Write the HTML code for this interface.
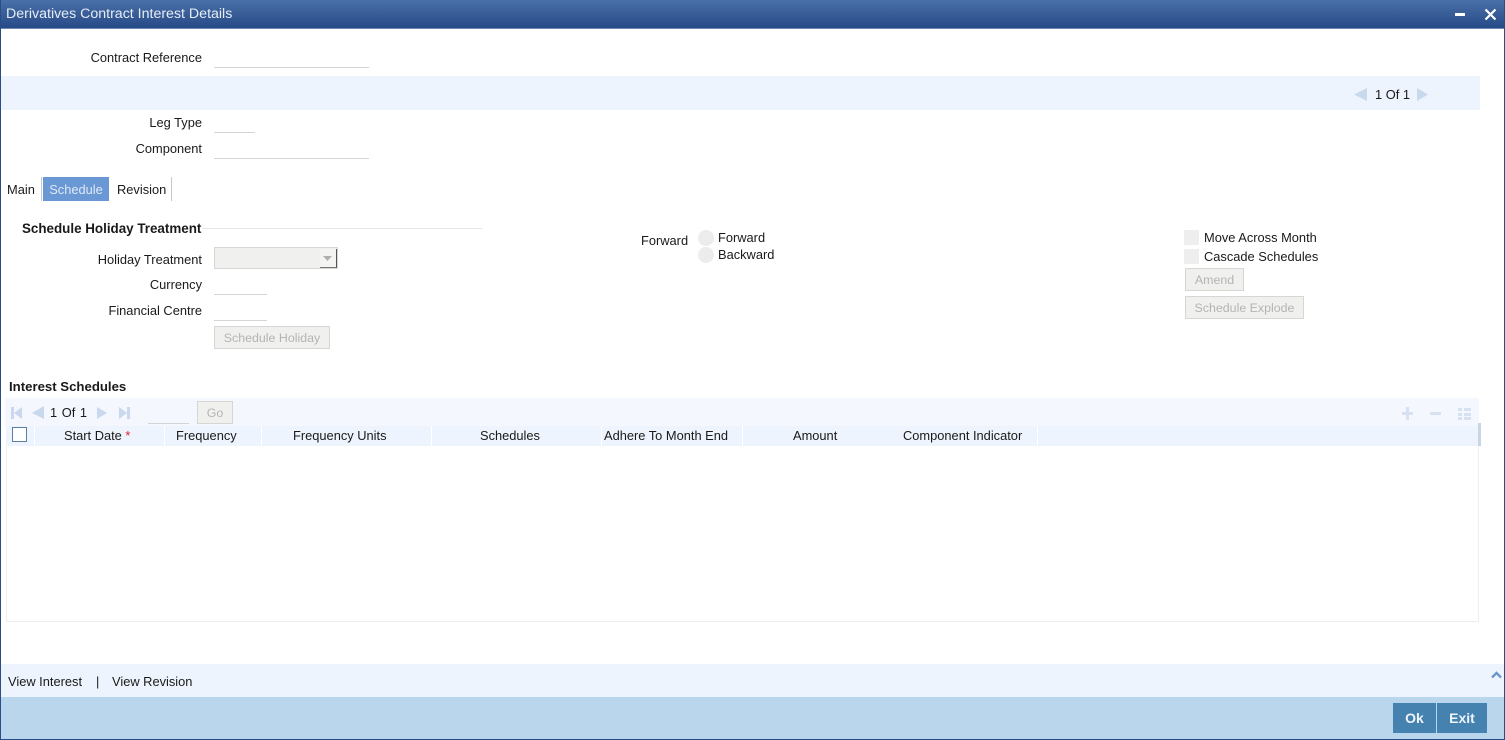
<!DOCTYPE html>
<html><head><meta charset="utf-8"><style>
html,body{margin:0;padding:0;background:#fff;width:1505px;height:740px;overflow:hidden}
body{position:relative;font-family:"Liberation Sans",Arial,sans-serif;font-size:12.85px;color:#1a1a1a}
.a{position:absolute}
.t{position:absolute;white-space:nowrap;line-height:16px;height:16px}
.r{position:absolute;white-space:nowrap;line-height:16px;height:16px;right:1303px;text-align:right}
.l{position:absolute;height:1px;background:#d4d4d4}
.b{position:absolute;box-sizing:border-box;background:#f0f0ee;border:1px solid #d6d6d2;color:#b4b4b4;text-align:center;font-size:12.4px;line-height:22px}
.h{position:absolute;top:426px;height:20px;line-height:20px;white-space:nowrap;text-align:center}
.s{position:absolute;top:426px;height:20px;width:1px;background:#fff}
</style></head><body>
<div class="a" style="left:0;top:0;width:1505px;height:29px;background:linear-gradient(#4a70a8,#264a86);border-bottom:1px solid #6f8cb0;box-sizing:border-box"></div>
<div class="t" style="left:6px;top:6px;color:#e6edf6;font-size:14.2px">Derivatives Contract Interest Details</div>
<div class="a" style="left:1455px;top:13px;width:10px;height:3px;background:#fff"></div>
<svg class="a" style="left:1484px;top:8px" width="13" height="13"><path d="M1.5 1.5L11.5 11.5M11.5 1.5L1.5 11.5" stroke="#fff" stroke-width="2.2"/></svg>
<div class="a" style="left:0;top:0;width:1px;height:740px;background:#2a4d88"></div>
<div class="a" style="left:1504px;top:0;width:1px;height:740px;background:#2a4d88"></div>
<div class="a" style="left:0;top:739px;width:1505px;height:1px;background:#2a4d88"></div>

<div class="r" style="top:50px">Contract Reference</div>
<div class="l" style="left:214px;top:67px;width:155px"></div>
<div class="a" style="left:1px;top:76px;width:1479px;height:34px;background:#eef4fd"></div>
<svg class="a" style="left:1354px;top:88px" width="13" height="13"><path d="M13 0V13L0 6.5Z" fill="#c9d8ec"/></svg>
<div class="t" style="left:1375px;top:87px">1 Of 1</div>
<svg class="a" style="left:1417px;top:88px" width="11" height="13"><path d="M0 0V13L11 6.5Z" fill="#c9d8ec"/></svg>

<div class="r" style="top:115px">Leg Type</div>
<div class="l" style="left:214px;top:132px;width:41px"></div>
<div class="r" style="top:141px">Component</div>
<div class="l" style="left:214px;top:158px;width:155px"></div>

<div class="t" style="left:7px;top:182px">Main</div>
<div class="a" style="left:41px;top:177px;width:1px;height:24px;background:#c8c8c8"></div>
<div class="a" style="left:43px;top:177px;width:66px;height:24px;background:#6a98d4;color:#dfe9f6;line-height:25px;text-align:center">Schedule</div>
<div class="t" style="left:117px;top:182px">Revision</div>
<div class="a" style="left:171px;top:177px;width:1px;height:24px;background:#c8c8c8"></div>

<div class="t" style="left:22px;top:221px;font-weight:bold;font-size:13.4px">Schedule Holiday Treatment</div>
<div class="l" style="left:202px;top:228px;width:280px;background:#e6e6e6"></div>

<div class="r" style="top:252px">Holiday Treatment</div>
<div class="a" style="left:214px;top:247px;width:124px;height:22px;box-sizing:border-box;background:#f0f0ee;border:1px solid #d6d6d2"></div>
<div class="a" style="left:320px;top:249px;width:17px;height:19px;box-sizing:border-box;background:#f4f4f2;border-right:1px solid #555;border-bottom:1px solid #777"></div>
<svg class="a" style="left:323px;top:256px" width="9" height="5"><path d="M0 0H9L4.5 5Z" fill="#b0b0b0"/></svg>
<div class="r" style="top:277px">Currency</div>
<div class="l" style="left:214px;top:294px;width:53px"></div>
<div class="r" style="top:303px">Financial Centre</div>
<div class="l" style="left:214px;top:320px;width:53px"></div>
<div class="b" style="left:214px;top:326px;width:116px;height:23px">Schedule Holiday</div>

<div class="t" style="left:641px;top:233px">Forward</div>
<div class="a" style="left:698px;top:230px;width:16px;height:16px;border-radius:50%;background:#ececec"></div>
<div class="t" style="left:718px;top:230px">Forward</div>
<div class="a" style="left:698px;top:247px;width:16px;height:16px;border-radius:50%;background:#ececec"></div>
<div class="t" style="left:718px;top:247px">Backward</div>

<div class="a" style="left:1184px;top:230px;width:15px;height:15px;background:#eeeeee"></div>
<div class="t" style="left:1204px;top:230px">Move Across Month</div>
<div class="a" style="left:1184px;top:249px;width:15px;height:15px;background:#eeeeee"></div>
<div class="t" style="left:1204px;top:249px">Cascade Schedules</div>
<div class="b" style="left:1185px;top:268px;width:59px;height:23px">Amend</div>
<div class="b" style="left:1185px;top:296px;width:119px;height:23px">Schedule Explode</div>

<div class="t" style="left:9px;top:379px;font-weight:bold;font-size:13.2px">Interest Schedules</div>
<div class="a" style="left:5px;top:398px;width:1474px;height:28px;background:#f4f8fe"></div>
<div class="a" style="left:6px;top:426px;width:1473px;height:196px;box-sizing:border-box;border:1px solid #eeeeee;border-top:0"></div>
<div class="a" style="left:6px;top:426px;width:1473px;height:20px;background:#eef4fd"></div>
<div class="a" style="left:1478px;top:423px;width:3px;height:23px;background:#c8d6e2"></div>
<svg class="a" style="left:11px;top:406px" width="120" height="14" fill="#c9d8ec"><path d="M0 1H3V13H0ZM11 1V13L3 7Z"/><path d="M33 0V13L21 7Z"/><path d="M86 1V13L96 7Z"/><path d="M108 1V13L116 7ZM116 1H119V13H116Z"/></svg>
<div class="t" style="left:50px;top:405px">1 <span style="margin-left:1px">Of</span> <span style="margin-left:1px">1</span></div>
<div class="l" style="left:148px;top:423px;width:41px"></div>
<div class="b" style="left:197px;top:401px;width:36px;height:23px">Go</div>
<svg class="a" style="left:1402px;top:407px" width="70" height="14" fill="#d6e2f1"><path d="M0 5H11V8H0Z"/><path d="M4 0H7V13H4Z"/><path d="M28 5H39V8H28Z"/><path d="M56 1H60V4H56ZM62 1H69V4H62ZM56 6H60V9H56ZM62 6H69V9H62ZM56 10H60V13H56ZM62 10H69V13H62Z"/></svg>

<div class="a" style="left:12px;top:427px;width:15px;height:15px;box-sizing:border-box;border:1px solid #5b7f9f;background:#fff"></div>
<div class="s" style="left:34px"></div>
<div class="h" style="left:64px">Start Date <span style="color:#d22">*</span></div>
<div class="s" style="left:164px"></div>
<div class="h" style="left:176px">Frequency</div>
<div class="s" style="left:261px"></div>
<div class="h" style="left:293px">Frequency Units</div>
<div class="s" style="left:431px"></div>
<div class="h" style="left:480px">Schedules</div>
<div class="s" style="left:601px"></div>
<div class="h" style="left:604px">Adhere To Month End</div>
<div class="s" style="left:742px"></div>
<div class="h" style="left:793px">Amount</div>
<div class="h" style="left:903px">Component Indicator</div>
<div class="s" style="left:1037px"></div>

<div class="a" style="left:1px;top:664px;width:1503px;height:33px;background:#edf4fd"></div>
<div class="t" style="left:8px;top:674px">View Interest</div>
<div class="t" style="left:96px;top:674px">|</div>
<div class="t" style="left:112px;top:674px">View Revision</div>
<svg class="a" style="left:1491px;top:671px" width="11" height="8"><path d="M1 6.5L5.5 2L10 6.5" fill="none" stroke="#6f96cc" stroke-width="2.4"/></svg>
<div class="a" style="left:1px;top:697px;width:1503px;height:42px;background:#bad6ec"></div>
<div class="a" style="left:1393px;top:703px;width:43px;height:30px;background:#4682b0;color:#eef4fa;font-weight:bold;font-size:14px;text-align:center;line-height:30px">Ok</div>
<div class="a" style="left:1437px;top:703px;width:50px;height:30px;background:#4682b0;color:#eef4fa;font-weight:bold;font-size:14px;text-align:center;line-height:30px">Exit</div>
</body></html>
